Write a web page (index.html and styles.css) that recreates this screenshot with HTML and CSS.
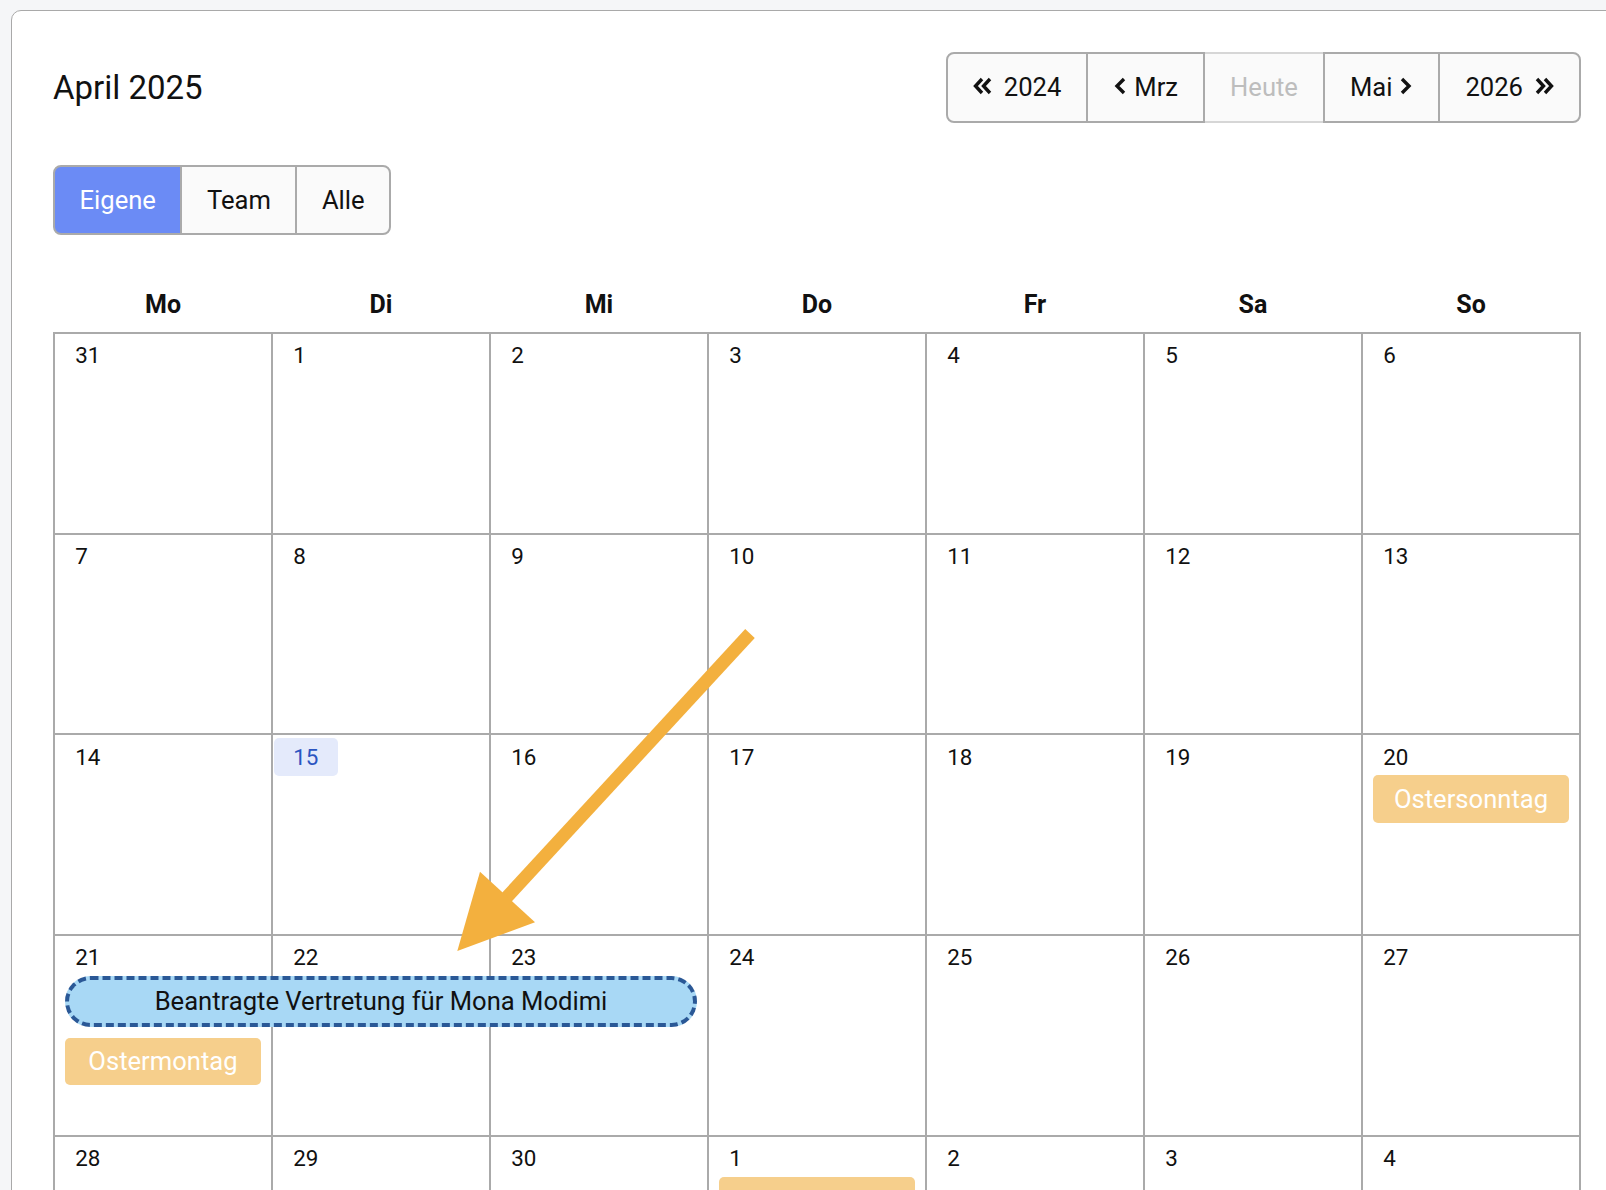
FILE: index.html
```html
<!DOCTYPE html>
<html lang="de">
<head>
<meta charset="utf-8">
<title>Kalender April 2025</title>
<link rel="stylesheet" href="styles.css">
</head>
<body>
<div class="card">
  <div class="toolbar">
    <h2 class="title">April 2025</h2>
    <div class="btn-group nav">
      <button class="btn"><svg class="ico ico-dbl ico-left" viewBox="0 0 20 18"><polyline points="9,2 2.5,9 9,16"/><polyline points="17,2 10.5,9 17,16"/></svg>2024</button>
      <button class="btn"><svg class="ico ico-sgl ico-left" viewBox="0 0 14 18"><polyline points="11,2 4,9 11,16"/></svg>Mrz</button>
      <button class="btn btn-disabled">Heute</button>
      <button class="btn">Mai<svg class="ico ico-sgl ico-right" viewBox="0 0 14 18"><polyline points="3,2 10,9 3,16"/></svg></button>
      <button class="btn">2026<svg class="ico ico-dbl ico-right" viewBox="0 0 20 18"><polyline points="3,2 9.5,9 3,16"/><polyline points="11,2 17.5,9 11,16"/></svg></button>
    </div>
  </div>

  <div class="btn-group filter">
    <button class="btn is-active">Eigene</button>
    <button class="btn">Team</button>
    <button class="btn">Alle</button>
  </div>

  <div class="calendar">
    <div class="weekdays">
      <div>Mo</div><div>Di</div><div>Mi</div><div>Do</div><div>Fr</div><div>Sa</div><div>So</div>
    </div>
    <div class="weeks">
      <div class="week">
        <div class="day"><span class="daynum">31</span></div>
        <div class="day"><span class="daynum">1</span></div>
        <div class="day"><span class="daynum">2</span></div>
        <div class="day"><span class="daynum">3</span></div>
        <div class="day"><span class="daynum">4</span></div>
        <div class="day"><span class="daynum">5</span></div>
        <div class="day"><span class="daynum">6</span></div>
      </div>
      <div class="week">
        <div class="day"><span class="daynum">7</span></div>
        <div class="day"><span class="daynum">8</span></div>
        <div class="day"><span class="daynum">9</span></div>
        <div class="day"><span class="daynum">10</span></div>
        <div class="day"><span class="daynum">11</span></div>
        <div class="day"><span class="daynum">12</span></div>
        <div class="day"><span class="daynum">13</span></div>
      </div>
      <div class="week">
        <div class="day"><span class="daynum">14</span></div>
        <div class="day"><span class="daynum today">15</span></div>
        <div class="day"><span class="daynum">16</span></div>
        <div class="day"><span class="daynum">17</span></div>
        <div class="day"><span class="daynum">18</span></div>
        <div class="day"><span class="daynum">19</span></div>
        <div class="day"><span class="daynum">20</span></div>
        <div class="ev holiday col-7 lane-1">Ostersonntag</div>
      </div>
      <div class="week">
        <div class="day"><span class="daynum">21</span></div>
        <div class="day"><span class="daynum">22</span></div>
        <div class="day"><span class="daynum">23</span></div>
        <div class="day"><span class="daynum">24</span></div>
        <div class="day"><span class="daynum">25</span></div>
        <div class="day"><span class="daynum">26</span></div>
        <div class="day"><span class="daynum">27</span></div>
        <div class="ev request span-1-3 lane-1">Beantragte Vertretung für Mona Modimi</div>
        <div class="ev holiday col-1 lane-2">Ostermontag</div>
      </div>
      <div class="week">
        <div class="day"><span class="daynum">28</span></div>
        <div class="day"><span class="daynum">29</span></div>
        <div class="day"><span class="daynum">30</span></div>
        <div class="day"><span class="daynum">1</span></div>
        <div class="day"><span class="daynum">2</span></div>
        <div class="day"><span class="daynum">3</span></div>
        <div class="day"><span class="daynum">4</span></div>
        <div class="ev holiday col-4 lane-1">Tag der Arbeit</div>
      </div>
    </div>
  </div>

  <svg class="arrow" width="1606" height="1190" viewBox="12 11 1606 1190">
    <line x1="750" y1="633.5" x2="495" y2="910"/>
    <polygon points="457.3,951 480,871.7 535,922.3"/>
  </svg>
</div>
</body>
</html>
```

FILE: styles.css
```css
* {
  box-sizing: border-box;
}

html,
body {
  margin: 0;
  padding: 0;
  overflow: hidden;
}

body {
  width: 1606px;
  height: 1190px;
  background: #f5f6f8;
  font-family: Roboto, "Liberation Sans", sans-serif;
  color: #111;
}

.card {
  position: relative;
  margin: 10px 0 0 11px;
  width: 1612px;
  padding: 41px;
  background: #fff;
  border: 1px solid #a9a9a9;
  border-radius: 10px;
}

.toolbar {
  display: flex;
  justify-content: space-between;
  align-items: center;
}

.title {
  margin: 0;
  padding-top: 2px;
  font-size: 33px;
  font-weight: 400;
  line-height: 40px;
  color: #111;
}

.btn-group {
  display: flex;
}

.btn {
  position: relative;
  z-index: 1;
  display: inline-flex;
  align-items: center;
  height: 70.5px;
  margin: 0;
  padding: 0 24.5px;
  font-family: inherit;
  font-size: 25.6px;
  line-height: 38px;
  color: #111;
  background: #fafafa;
  border: 2px solid #aaa;
  border-radius: 0;
}

.nav .btn {
  padding: 0 25px;
}

.btn + .btn {
  margin-left: -2px;
}

.btn:first-child {
  border-radius: 8px 0 0 8px;
}

.btn:last-child {
  border-radius: 0 8px 8px 0;
}

.btn-disabled {
  z-index: 0;
  color: #bdbdbd;
  border-color: #d6d6d6;
}

.is-active {
  background: #6b8bf5;
  color: #fff;
}

.ico {
  display: block;
  height: 18px;
  position: relative;
  top: -1px;
  fill: none;
  stroke: currentColor;
  stroke-width: 3.4;
  stroke-linecap: butt;
  stroke-linejoin: miter;
}

.ico-dbl {
  width: 20px;
}

.ico-sgl {
  width: 14px;
}

.ico-dbl.ico-left {
  margin-right: 11px;
}

.ico-sgl.ico-left {
  margin-right: 7px;
}

.ico-sgl.ico-right {
  margin-left: 7px;
}

.ico-dbl.ico-right {
  margin-left: 11px;
}

.filter {
  margin-top: 42px;
}

.calendar {
  margin-top: 50px;
}

.weekdays {
  display: grid;
  grid-template-columns: repeat(7, 1fr);
  column-gap: 2px;
  padding: 0 2px 7px;
  font-size: 25px;
  font-weight: 700;
  line-height: 40px;
  text-align: center;
}

.weeks {
  display: flex;
  flex-direction: column;
  gap: 2px;
  padding: 2px;
  background: #aaa;
}

.week {
  display: grid;
  grid-template-columns: repeat(7, 1fr);
  grid-template-rows: 40px auto auto 1fr;
  column-gap: 2px;
  height: 198.67px;
}

.day {
  grid-row: 1 / -1;
  background: #fff;
}

.day:nth-child(1) { grid-column: 1; }
.day:nth-child(2) { grid-column: 2; }
.day:nth-child(3) { grid-column: 3; }
.day:nth-child(4) { grid-column: 4; }
.day:nth-child(5) { grid-column: 5; }
.day:nth-child(6) { grid-column: 6; }
.day:nth-child(7) { grid-column: 7; }

.daynum {
  display: inline-block;
  margin: 3px 0 0 1px;
  padding: 6.4px 19.2px;
  font-size: 22.4px;
  line-height: 25px;
  border-radius: 5px;
  color: #111;
}

.today {
  background: #e4eafb;
  color: #2b55c1;
}

.ev {
  position: relative;
  z-index: 1;
  margin: 0 10px 10.5px;
  font-size: 25.6px;
  line-height: 38.4px;
  text-align: center;
  white-space: nowrap;
  overflow: hidden;
}

.holiday {
  padding: 4.5px 8px;
  background: #f6cf8c;
  color: #fff;
  border-radius: 5px;
}

.request {
  padding: 2.5px 8px;
  background: #a8d8f5;
  color: #111;
  border: 4px dashed #2a5896;
  border-radius: 26px;
}

.col-1 { grid-column: 1; }
.col-4 { grid-column: 4; }
.col-7 { grid-column: 7; }
.span-1-3 { grid-column: 1 / 4; }
.lane-1 { grid-row: 2; }
.lane-2 { grid-row: 3; }

.arrow {
  position: absolute;
  left: 0;
  top: 0;
  overflow: visible;
  pointer-events: none;
  z-index: 5;
}

.arrow line {
  stroke: #f3b03e;
  stroke-width: 13;
  stroke-linecap: butt;
}

.arrow polygon {
  fill: #f3b03e;
}
```
